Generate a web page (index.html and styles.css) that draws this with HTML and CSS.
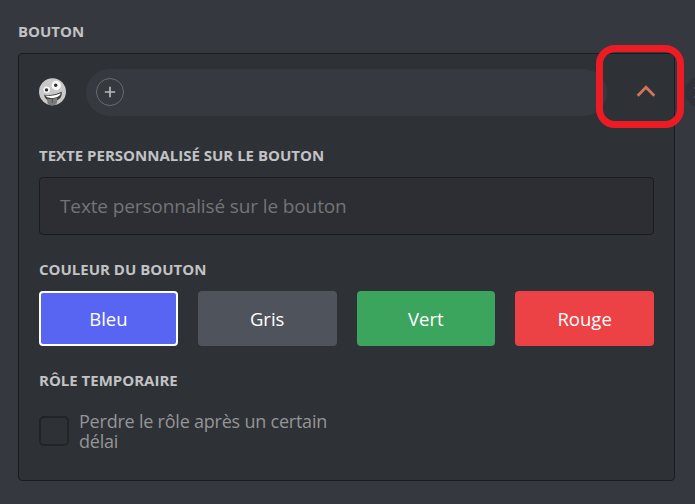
FILE: index.html
```html
<!DOCTYPE html>
<html lang="fr">
<head>
<meta charset="utf-8">
<title>Bouton</title>
<link rel="stylesheet" href="styles.css">
</head>
<body>
<main class="page">
  <h2 class="label">BOUTON</h2>
  <section class="panel">
    <div class="role-row">
      <svg class="emoji" viewBox="0 0 28 28">
        <circle cx="13.500" cy="13.800" r="13.500" fill="#c9c9c9"/>
        <circle cx="7.700" cy="11.800" r="3.300" fill="#f8f8f8"/>
        <circle cx="17.200" cy="7.500" r="4.700" fill="#f8f8f8"/>
        <circle cx="7.500" cy="11.900" r="1.700" fill="#303030"/>
        <circle cx="16.700" cy="7.200" r="1.700" fill="#303030"/>
        <path d="M5 16.800Q14 18.500 22.700 13.800C23.500 19.500 19.500 22.800 15 23.300C9 24 6 21 5 16.800Z" fill="#404040"/>
        <path d="M6 17.600Q14 19 21.800 15.200Q21.300 18 16.500 19.400Q9 21.300 6 17.600Z" fill="#fff"/>
        <path d="M8 20.400Q13.500 21.800 18.200 19.300L18.200 24C17.900 28.600 9 28.800 8.400 24.500Z" fill="#7b7b7b"/>
        <path d="M13.300 21V25" stroke="#505050" stroke-width="1"/>
      </svg>
      <div class="pill">
        <button class="add" aria-label="Ajouter"><svg viewBox="0 0 28 28"><path d="M14 8.800V19.200M8.800 14H19.200" fill="none" stroke="#b8b9bb" stroke-width="1.700"/></svg></button>
      </div>
      <svg class="chevron" viewBox="0 0 20 14"><path d="M1.700 11.800L10 3.300L18.300 11.800" fill="none" stroke="#d3735c" stroke-width="2.800"/></svg>
      <span class="highlight"></span>
    </div>
    <h3 class="label label-text">TEXTE PERSONNALISÉ SUR LE BOUTON</h3>
    <input class="field" type="text" placeholder="Texte personnalisé sur le bouton">
    <h3 class="label label-color">COULEUR DU BOUTON</h3>
    <div class="colors">
      <button class="color blue">Bleu</button>
      <button class="color grey">Gris</button>
      <button class="color green">Vert</button>
      <button class="color red">Rouge</button>
    </div>
    <h3 class="label label-temp">RÔLE TEMPORAIRE</h3>
    <div class="check-row">
      <span class="checkbox" role="checkbox" aria-checked="false"></span>
      <span class="check-text">Perdre le rôle après un certain délai</span>
    </div>
  </section>
  <svg class="side-button" viewBox="0 0 30 30"><circle cx="15" cy="15" r="15" fill="#2f3136"/><path d="M9 11H13M9 20H13" stroke="#3f577c" stroke-width="1.300"/></svg>
</main>
</body>
</html>
```
FILE: styles.css
```css
* { box-sizing: border-box; }
body {
  margin: 0;
  background: #363840;
  font-family: "Open Sans", "Noto Sans", sans-serif;
  overflow: hidden;
}
button { font-family: inherit; padding: 0; }
.page {
  position: relative;
  height: 504px;
  padding: 21px 20px 0 18px;
  overflow: hidden;
}
.label {
  margin: 0;
  color: #c2c3c5;
  font-size: 15px;
  font-weight: 700;
  line-height: 20px;
  white-space: nowrap;
}
.panel {
  height: 428px;
  margin-top: 12px;
  padding: 15px 20px 0;
  border: 1px solid #1b1c1d;
  border-radius: 4px;
  background: #2e3136;
}
.role-row {
  position: relative;
  display: flex;
  align-items: center;
  height: 47px;
}
.emoji { flex: none; width: 28px; height: 28px; margin-top: -1px; }
.pill {
  flex: none;
  width: 521px;
  height: 47px;
  margin-left: 19px;
  padding: 9px 10px;
  border-radius: 24px;
  background: #36393f;
}
.add {
  display: block;
  width: 28px;
  height: 28px;
  border: 1px solid #6a6a6c;
  border-radius: 50%;
  background: transparent;
}
.add svg { display: block; width: 28px; height: 28px; margin: -1px; }
.chevron { flex: none; width: 20px; height: 14px; margin: -3px 0 0 29px; }
.highlight {
  position: absolute;
  left: 557px;
  top: -24px;
  width: 88px;
  height: 83px;
  border: 7px solid #ed1c24;
  border-radius: 19px;
}
.label-text { margin-top: 29px; }
.field {
  display: block;
  width: 615px;
  height: 58px;
  margin-top: 12px;
  padding: 0 20px;
  border: 1px solid #1b1c1d;
  border-radius: 4px;
  background: #2c2e33;
  font: 400 19px "Open Sans", "Noto Sans", sans-serif;
  letter-spacing: -0.12px;
}
.field::placeholder { color: #737476; opacity: 1; }
.label-color { margin-top: 24px; }
.colors {
  display: grid;
  grid-template-columns: repeat(4, 1fr);
  gap: 20px;
  width: 615px;
  height: 55px;
  margin-top: 12px;
}
.color {
  border: 0;
  border-radius: 4px;
  color: #fff;
  font-size: 18.5px;
}
.blue { border: 2px solid #fff; background: #5865f2; }
.grey { background: #4f545c; }
.green { background: #3ba55d; }
.red { background: #ed4245; }
.label-temp { margin-top: 24px; }
.check-row { display: flex; align-items: center; height: 40px; margin-top: 21px; }
.checkbox {
  width: 30px;
  height: 30px;
  border: 2px solid #222427;
  border-radius: 5px;
}
.check-text {
  width: 270px;
  margin-left: 10px;
  color: #949597;
  font-size: 18px;
  line-height: 20px;
  letter-spacing: -0.22px;
}
.side-button {
  position: absolute;
  left: 685px;
  top: 77px;
  width: 30px;
  height: 30px;
}
```
